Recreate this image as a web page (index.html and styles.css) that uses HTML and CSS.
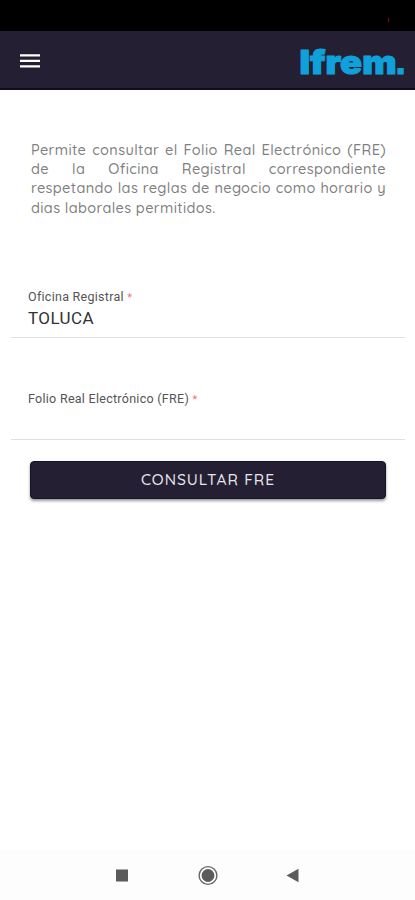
FILE: index.html
```html
<!DOCTYPE html>
<html lang="es">
<head>
<meta charset="utf-8">
<meta name="viewport" content="width=device-width">
<title>Ifrem</title>
<link rel="stylesheet" href="styles.css">
</head>
<body>
<div class="status"><span class="status-dot"></span></div>
<header class="toolbar">
  <svg class="menu" viewBox="0 0 20 14"><path d="M0 1.4H20M0 6.9H20M0 12.4H20" stroke="#fff" stroke-width="2.2"/></svg>
  <svg class="logo" viewBox="0 0 107 36"><text x="-0.5" y="28.6" textLength="97" lengthAdjust="spacingAndGlyphs">Ifrem</text><text class="stop" x="95.5" y="28.6">.</text></svg>
</header>
<main>
  <p class="intro">
    <span>Permite consultar el Folio Real Electrónico (FRE)</span>
    <span>de la Oficina Registral correspondiente</span>
    <span>respetando las reglas de negocio como horario y</span>
    <span class="last">dias laborales permitidos.</span>
  </p>
  <div class="field">
    <div class="label">Oficina Registral <b>*</b></div>
    <div class="value">TOLUCA</div>
  </div>
  <div class="field second">
    <div class="label">Folio Real Electrónico (FRE) <b>*</b></div>
  </div>
  <button class="submit">CONSULTAR FRE</button>
</main>
<nav class="nav">
  <svg viewBox="0 0 415 50">
    <rect x="116" y="19.5" width="12" height="12" fill="#5b5b5b"/>
    <circle cx="208" cy="25.5" r="8.9" fill="none" stroke="#666" stroke-width="1.4"/>
    <circle cx="208" cy="25.5" r="6.4" fill="#5b5b5b"/>
    <path d="M286.5 25.5L298.5 18.7V32.3Z" fill="#5b5b5b"/>
  </svg>
</nav>
</body>
</html>
```
FILE: styles.css
```css
* { box-sizing: border-box; }
body {
  margin: 0;
  height: 900px;
  display: flex;
  flex-direction: column;
  background: #fff;
  font-family: Roboto, sans-serif;
  overflow: hidden;
}
.status {
  height: 31px;
  background: #000;
  display: flex;
  justify-content: flex-end;
  padding: 18px 26px 0 0;
}
.status-dot { width: 1px; height: 4px; background: #7a0a20; }
.toolbar {
  height: 59px;
  background: #241f33;
  border-bottom: 2px solid #100b20;
  display: flex;
  justify-content: space-between;
  padding: 14px 8px 0 20px;
}
.menu { width: 20px; height: 14px; margin-top: 9px; }
.logo { width: 107px; height: 36px; overflow: visible; }
.logo text {
  font: 900 33px Inter, sans-serif;
  fill: #10a1da;
  stroke: #10a1da;
  stroke-width: 1;
}
.logo .stop { font: 700 37px "Liberation Sans", sans-serif; }
main { flex: 1; }
.intro {
  margin: 50px 29px 0 31px;
  font: 500 14.5px/19.2px Quicksand, Lato, sans-serif;
  color: #808080;
}
.intro span {
  display: block;
  white-space: nowrap;
  text-align: justify;
  text-align-last: justify;
  letter-spacing: 0.38px;
}
.intro .last { width: 184px; }
.field {
  height: 120px;
  margin: 1px 10px 0 11px;
  padding: 71px 17px 0;
  border-bottom: 1px solid #e0e0e0;
}
.second { height: 102px; margin-top: 0; padding-top: 53px; }
.label { font-size: 12.5px; line-height: 16px; color: #555; white-space: nowrap; letter-spacing: 0.28px; }
.label b { color: #ef7480; font-weight: 400; font-size: 11px; }
.value { font-size: 17px; line-height: 20px; margin-top: 2px; color: #333; letter-spacing: 0.4px; }
.submit {
  display: block;
  width: 356px;
  height: 38px;
  margin: 21px 0 0 30px;
  padding: 0;
  border: 1px solid #161126;
  border-radius: 4px;
  background: #241f33;
  box-shadow: 0 2px 3px rgba(0, 0, 0, 0.4);
  color: #e8e6ec;
  font: 500 15.5px/35px Quicksand, Lato, sans-serif;
  letter-spacing: 0.95px;
}
.nav { height: 50px; background: #fdfdfd; }
.nav svg { display: block; width: 415px; height: 50px; }
```
